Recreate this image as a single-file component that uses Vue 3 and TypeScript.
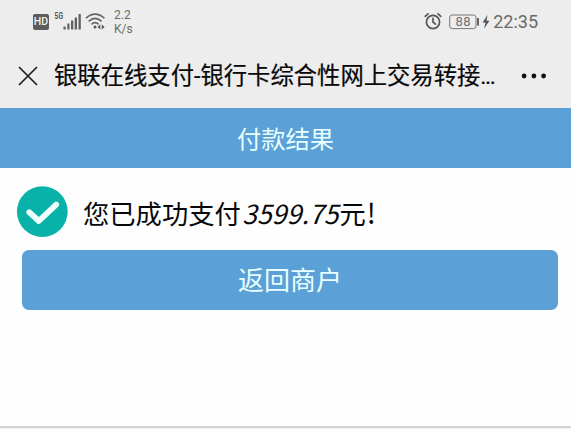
<script setup lang="ts">
const time = '22:35'
const battery = 88
const title = '银联在线支付-银行卡综合性网上交易转接'
const amount = '3599.75'
</script>

<template>
  <div class="screen">
    <header class="top">
      <div class="status">
        <div class="status-left">
          <span class="hd">HD</span>
          <svg class="signal" width="29" height="20" viewBox="0 0 29 20">
            <text x="0.5" y="9" class="net" textLength="8.5" lengthAdjust="spacingAndGlyphs">5G</text>
            <g fill="#606060">
              <rect x="9.5" y="16.5" width="2.2" height="3" />
              <rect x="13.3" y="13.5" width="2.2" height="6" />
              <rect x="17" y="10.5" width="2.3" height="9" />
              <rect x="20.7" y="7.5" width="2.3" height="12" />
              <rect x="24.5" y="4" width="2.3" height="15.5" />
            </g>
          </svg>
          <svg class="wifi" width="22" height="18" viewBox="0 0 22 18">
            <g fill="none" stroke="#646464" stroke-width="1.7">
              <path d="M1 6.2Q10 -1.8 19.4 6.2" />
              <path d="M3.7 9.3Q10 3.5 16.6 9.3" />
              <path d="M6.5 12.3Q10 9 13.6 12.3" />
            </g>
            <circle cx="10" cy="15" r="1.5" fill="#555" />
            <path d="M15.3 12.5v5L12.5 15zM16.8 12.5v5l2.8-2.5z" fill="#555" />
          </svg>
          <span class="speed">2.2<br />K/s</span>
        </div>
        <div class="status-right">
          <svg class="alarm" width="18" height="18" viewBox="0 0 18 18" fill="none" stroke="#555" stroke-width="1.7" stroke-linecap="round">
            <circle cx="9" cy="10" r="6.6" />
            <path d="M1.2 4.3 4 1.8M16.8 4.3 14 1.8" />
            <path d="M9 6.3V10l2.5 2.2" />
          </svg>
          <svg class="battery" width="42" height="18" viewBox="0 0 42 18">
            <rect x="0.7" y="2" width="26.3" height="13.6" rx="2.5" fill="none" stroke="#777" />
            <text x="14" y="13.4" class="percent" text-anchor="middle" textLength="15">{{ battery }}</text>
            <rect x="28" y="5" width="2" height="7.5" fill="#666" />
            <path d="M38.6 2 33.6 9.4h3l-1.6 6.4 5.4-8h-3z" fill="#505050" />
          </svg>
          <span class="time">{{ time }}</span>
        </div>
      </div>
      <div class="nav">
        <svg class="close" width="20" height="20" viewBox="0 0 20 20">
          <path d="M1 1 19 19M19 1 1 19" stroke="#202020" stroke-width="1.7" />
        </svg>
        <span class="title">{{ title }}<span class="dots">...</span></span>
        <svg class="more" width="26" height="6" viewBox="0 0 26 6" fill="#111">
          <circle cx="3.1" cy="3" r="2.4" />
          <circle cx="12.9" cy="3" r="2.4" />
          <circle cx="22.6" cy="3" r="2.4" />
        </svg>
      </div>
    </header>
    <h1 class="banner">付款结果</h1>
    <main class="body">
      <div class="result">
        <svg width="52" height="52" viewBox="0 0 52 52">
          <circle cx="26.3" cy="25.6" r="25.4" fill="#08b2a8" />
          <path d="M13.2 26.2 22.8 35 40.2 18.6" fill="none" stroke="#f0fffc" stroke-width="5.8" stroke-linecap="round" stroke-linejoin="round" />
        </svg>
        <p class="message">您已成功支付<em>{{ amount }}</em>元<span class="mark">!</span></p>
      </div>
      <button class="back" type="button">返回商户</button>
    </main>
    <footer class="bottom"></footer>
  </div>
</template>

<style>
body {
  margin: 0;
}
</style>

<style scoped>
.screen {
  display: flex;
  flex-direction: column;
  width: 571px;
  height: 429px;
  overflow: hidden;
  background: #fefefe;
  color: #080808;
  font-family: "Noto Sans CJK SC", sans-serif;
}
.top {
  flex: none;
  height: 108px;
  background: #ededed;
}
.status {
  display: flex;
  justify-content: space-between;
  height: 44px;
  padding: 0 33px 0 33px;
  color: #6a6a6a;
}
.status-left,
.status-right {
  display: flex;
  align-items: center;
}
.hd {
  width: 16px;
  height: 16px;
  border-radius: 2px;
  background: #5c5c5c;
  color: #f2f2f2;
  font: 500 10.5px/16px Roboto, sans-serif;
  text-align: center;
}
.signal {
  margin: -5px 0 0 5px;
}
.net {
  fill: #555;
  font: bold 9px Roboto, sans-serif;
}
.wifi {
  margin: -2px 0 0 2px;
}
.speed {
  margin-left: 7px;
  font: 12px/14px Roboto, sans-serif;
}
.status-right {
  gap: 6px;
}
.alarm {
  margin-top: -2px;
}
.battery {
  margin: -1px 0 0 1px;
}
.percent {
  fill: #707070;
  font: 13px Roboto, sans-serif;
}
.time {
  margin-left: -4px;
  font: 18px/20px Roboto, sans-serif;
}
.nav {
  display: flex;
  align-items: center;
  height: 63px;
  padding: 0 24px 0 17.5px;
}
.close {
  margin-top: 1px;
}
.title {
  margin-left: 16.5px;
  font-family: Roboto, "Noto Sans CJK SC", sans-serif;
  font-size: 23.33px;
  line-height: 36px;
  white-space: nowrap;
  -webkit-text-stroke: 0.2px #080808;
}
.dots {
  letter-spacing: -1.4px;
}
.more {
  margin: 1px 0 0 auto;
}
.banner {
  flex: none;
  height: 60px;
  margin: 0;
  background: #5ba1d7;
  color: #e8ffff;
  font-size: 24.3px;
  font-weight: 400;
  line-height: 59px;
  text-align: center;
}
.body {
  flex: 1;
  padding: 18px 13px 0 16px;
}
.result {
  display: flex;
  align-items: center;
  height: 52px;
}
.message {
  margin: 2px 0 0 15px;
  font-size: 26.3px;
  line-height: 40px;
  white-space: nowrap;
}
.message em {
  margin: 0 1px 0 1.5px;
  letter-spacing: 0.2px;
}
.mark {
  margin-left: 1px;
  font-size: 28px;
  line-height: 1;
}
.back {
  display: block;
  width: 536px;
  height: 60px;
  margin: 12px 0 0 6px;
  padding: 0 0 2px;
  border: 0;
  border-radius: 7px;
  background: #5ba1d7;
  color: #e8ffff;
  font-family: inherit;
  font-size: 26px;
  line-height: 58px;
  text-align: center;
}
.bottom {
  flex: none;
  height: 1px;
  border-top: 2px solid #d4d4d4;
  background: #eee;
}
</style>
